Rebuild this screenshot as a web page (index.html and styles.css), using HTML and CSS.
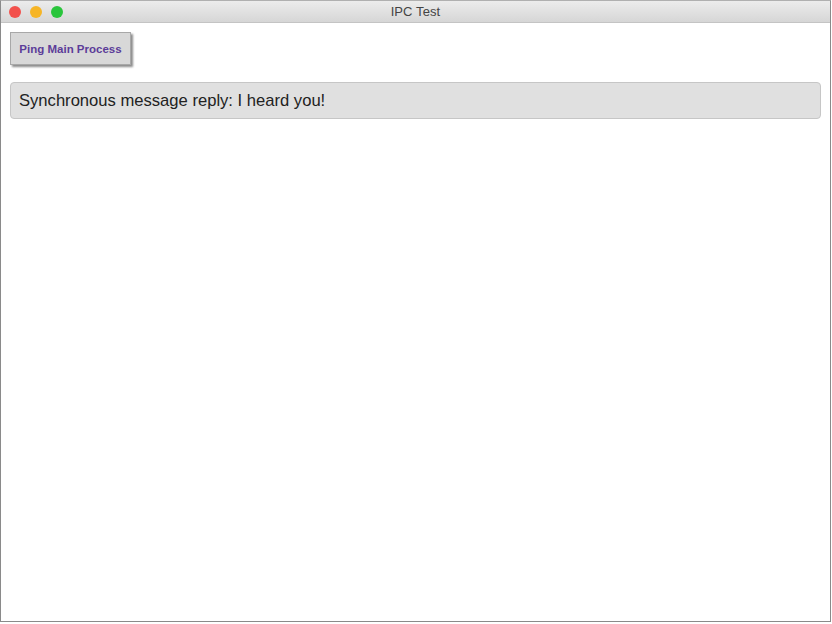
FILE: index.html
```html
<!DOCTYPE html>
<html>
<head>
<meta charset="utf-8">
<title>IPC Test</title>
<link rel="stylesheet" href="styles.css">
</head>
<body>
<div class="window">
  <div class="titlebar">
    <div class="lights">
      <span class="light red"></span>
      <span class="light yellow"></span>
      <span class="light green"></span>
    </div>
    <div class="title">IPC Test</div>
  </div>
  <div class="content">
    <button class="ping">Ping Main Process</button>
    <div class="reply">Synchronous message reply: I heard you!</div>
  </div>
</div>
</body>
</html>
```
FILE: styles.css
```css
html, body {
  margin: 0;
  padding: 0;
  background: #fff;
}
.window {
  box-sizing: border-box;
  width: 831px;
  height: 622px;
  border: 1px solid #8a8a8a;
  border-top-color: #b0b0b0;
  background: #fff;
  display: flex;
  flex-direction: column;
  font-family: "Liberation Sans", Arial, sans-serif;
}
.titlebar {
  position: relative;
  height: 21px;
  flex: none;
  background: linear-gradient(#ececec, #d6d6d6);
  border-bottom: 1px solid #c4c4c4;
  display: flex;
  align-items: center;
  justify-content: center;
}
.lights {
  position: absolute;
  left: 8px;
  top: 5px;
  display: flex;
  gap: 9px;
}
.light {
  width: 12px;
  height: 12px;
  border-radius: 50%;
  display: block;
}
.red { background: #f2514c; }
.yellow { background: #f6b526; }
.green { background: #2ac53c; }
.title {
  font-size: 13px;
  color: #444;
  letter-spacing: 0.1px;
}
.content {
  padding: 9px 9px 0 9px;
  display: flex;
  flex-direction: column;
  align-items: flex-start;
}
.ping {
  box-sizing: border-box;
  width: 121px;
  height: 33px;
  margin: 0;
  padding: 0;
  background: #d8d8d8;
  border: 1px solid #a8a8a8;
  box-shadow: 2px 2px 2px #8c8c8c;
  font-family: "Liberation Sans", Arial, sans-serif;
  font-weight: bold;
  font-size: 11.5px;
  color: #5c3d99;
}
.reply {
  box-sizing: border-box;
  margin-top: 17px;
  width: 811px;
  height: 37px;
  padding: 0 8px;
  display: flex;
  align-items: center;
  background: #e0e0e0;
  border: 1px solid #c6c6c6;
  border-radius: 4px;
  font-size: 16.6px;
  color: #222;
}
```
